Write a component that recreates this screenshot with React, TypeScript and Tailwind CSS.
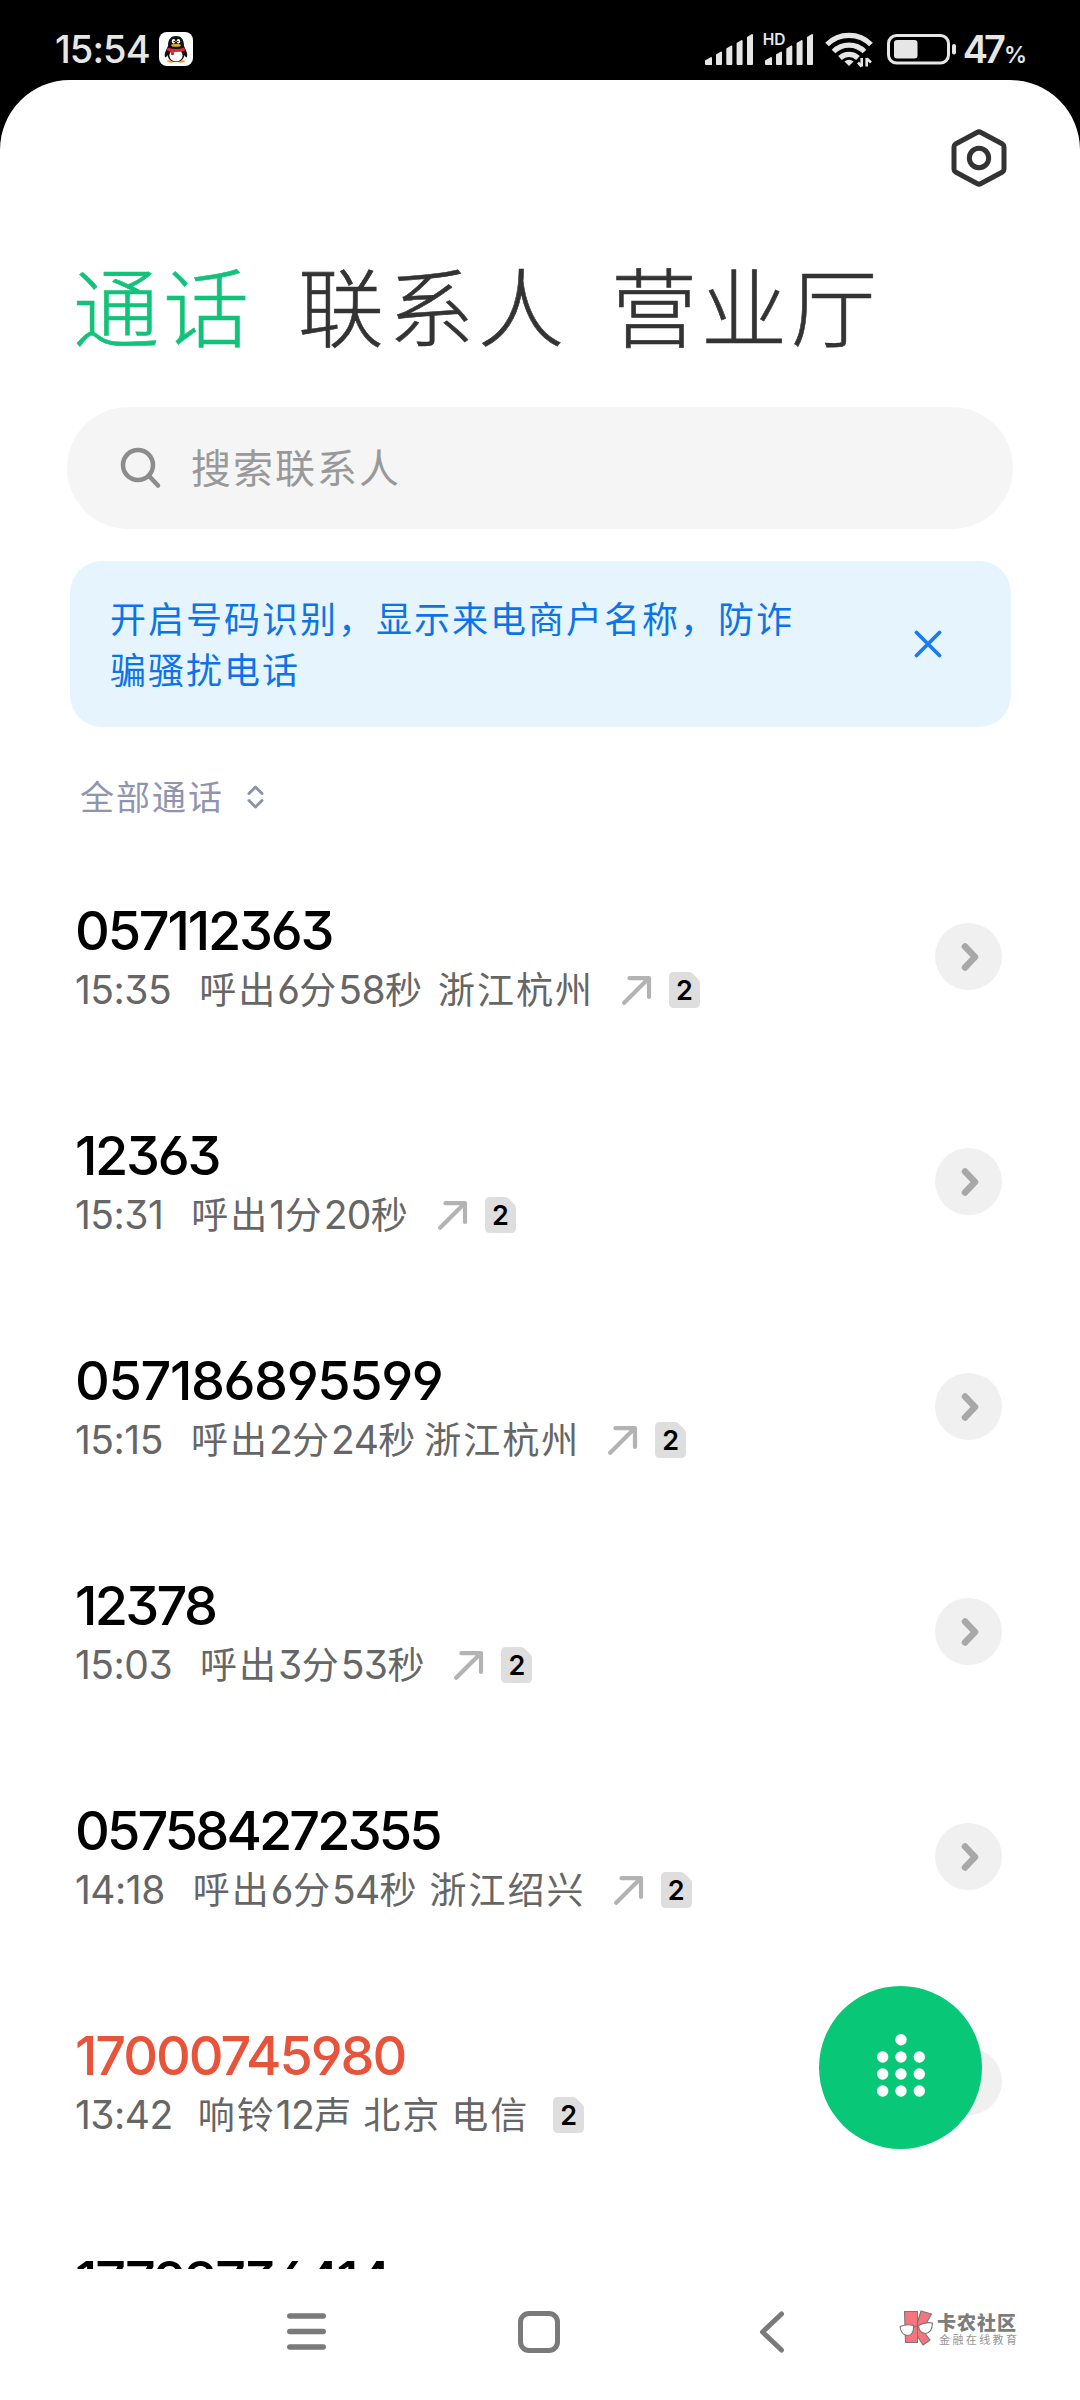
import React from 'react';

type Call = {
    number: string;
    tracking: string;
    time: string;
    detail: string;
    space?: string;
    outgoing?: boolean;
    missed?: boolean;
};

const calls: Call[] = [
    { number: '057112363', tracking: 'tracking-[-2.2px]', time: '15:35', detail: '呼出6分58秒 浙江杭州', space: 'w-[14px]', outgoing: true },
    { number: '12363', tracking: 'tracking-[-2.3px]', time: '15:31', detail: '呼出1分20秒', outgoing: true },
    { number: '057186895599', tracking: 'tracking-[-1.4px]', time: '15:15', detail: '呼出2分24秒 浙江杭州', space: 'w-[7px]', outgoing: true },
    { number: '12378', tracking: 'tracking-[-2.7px]', time: '15:03', detail: '呼出3分53秒', outgoing: true },
    { number: '057584272355', tracking: 'tracking-[-2.9px]', time: '14:18', detail: '呼出6分54秒 浙江绍兴', space: 'w-[11px]', outgoing: true },
    { number: '17000745980', tracking: 'tracking-[-2.1px]', time: '13:42', detail: '响铃12声 北京 电信', space: 'w-[10px]', missed: true },
    { number: '17798736414', tracking: 'tracking-[-2.2px]', time: '', detail: '' },
];

const digitFont = "font-['Inter',sans-serif] [font-feature-settings:'cv09','cv03','cv04']";
const hanFont = "font-['Noto_Sans_CJK_SC',sans-serif]";

/* Digits and Chinese runs use different families and sizes */
const Mixed: React.FC<{ text: string; space?: string }> = ({ text, space }) => (
    <span className="flex items-center whitespace-pre">
        {(text.match(/[0-9]+|[^0-9 ]+| /g) ?? []).map((run, i) => {
            if (run === ' ') return <span key={i} className={space}> </span>;
            return /[0-9]/.test(run) ? (
                <span key={i} className={`${digitFont} text-[39px] tracking-[-0.6px]`}>{run}</span>
            ) : (
                <span key={i} className={`${hanFont} relative -top-[2px] text-[37px] tracking-[2px]`}>{run}</span>
            );
        })}
    </span>
);

const SignalBars: React.FC = () => (
    <svg width="48" height="32" viewBox="0 0 48 32" fill="#e6e6e6">
        <path d="M0 26.5 L6 23 Q7 23 7 24 V31 H1 Q0 31 0 30Z" />
        <path d="M11 20.5 L16 17.5 Q17 17.5 17 18.5 V30 Q17 31 16 31 H12 Q11 31 11 30Z" />
        <path d="M21.3 14.5 L26.3 11.5 Q27.3 11.5 27.3 12.5 V30 Q27.3 31 26.3 31 H22.3 Q21.3 31 21.3 30Z" />
        <path d="M31.6 9 L36.6 6 Q37.6 6 37.6 7 V30 Q37.6 31 36.6 31 H32.6 Q31.6 31 31.6 30Z" />
        <path d="M42 3 L47 0 Q48 0 48 1 V30 Q48 31 47 31 H43 Q42 31 42 30Z" />
    </svg>
);

const QQIcon: React.FC = () => (
    <svg width="34" height="34" viewBox="0 0 34 34">
        <rect width="34" height="34" rx="8" fill="#fff" />
        <ellipse cx="12" cy="29.3" rx="4" ry="1.4" fill="#f0a830" />
        <ellipse cx="22" cy="29.3" rx="4" ry="1.4" fill="#f0a830" />
        <path d="M9 14 C9 7 12 4 17 4 C22 4 25 7 25 14 C27 18 29 22 28 25 C27 26 26 24 25.5 23 C25 27 22 30 17 30 C12 30 9 27 8.5 23 C8 24 7 26 6 25 C5 22 7 18 9 14Z" fill="#111" />
        <ellipse cx="17" cy="23.5" rx="6.6" ry="6" fill="#fff" />
        <ellipse cx="14.6" cy="9.3" rx="1.8" ry="2.4" fill="#fff" />
        <ellipse cx="19.4" cy="9.3" rx="1.8" ry="2.4" fill="#fff" />
        <circle cx="15.2" cy="9.6" r=".8" fill="#111" />
        <circle cx="18.9" cy="9.6" r=".8" fill="#111" />
        <ellipse cx="17" cy="13.3" rx="4.8" ry="1.5" fill="#e0b020" />
        <path d="M8.6 15.5 Q17 18.5 25.4 15.5 L26 18.5 Q21 20.5 15 20 V23 H12 V19.3 Q10 19 8 18.5Z" fill="#e02b35" />
    </svg>
);

const StatusBar: React.FC = () => (
    <header className="flex h-[80px] items-start justify-between bg-black pl-[55px] pr-[54px] pt-[32px] text-[#e6e6e6]">
        <div className="flex items-center gap-[9px]">
            <span className="font-['Inter',sans-serif] text-[38px] font-medium leading-[34px] tracking-[-0.9px]">15:54</span>
            <QQIcon />
        </div>
        <div className="flex h-[34px] items-start">
            <div className="mt-[2px]"><SignalBars /></div>
            <div className="relative ml-[12px] mt-[2px]">
                <SignalBars />
                <span className="absolute -left-[4px] -top-[2px] bg-black pl-[2px] pr-[1px] font-['Inter',sans-serif] text-[15.5px] font-semibold leading-[16px]">HD</span>
            </div>
            <svg className="ml-[12px]" width="48" height="36" viewBox="0 0 48 36" fill="none" stroke="#e6e6e6">
                <path d="M2 12.5 A31 31 0 0 1 46 12.5" strokeWidth="5.2" />
                <path d="M8.5 19.5 A22 22 0 0 1 39.5 19.5" strokeWidth="5.2" />
                <path d="M15 26 A13 13 0 0 1 33 26" strokeWidth="5.2" />
                <path d="M24 34 L19.5 29.5 A6.5 6.5 0 0 1 28.5 29.5Z" fill="#e6e6e6" stroke="none" />
                <path d="M36.7 26 V34.5 M41.7 26 V34.5" strokeWidth="2.6" />
                <path d="M33 30.5 L36.7 34.5 M41.7 26.5 L46 30.5" strokeWidth="2.6" />
            </svg>
            <svg className="ml-[14px] mt-[2px]" width="70" height="31" viewBox="0 0 70 31" fill="none">
                <rect x="1.5" y="1.5" width="60" height="27.5" rx="8" stroke="#e6e6e6" strokeWidth="3" />
                <rect x="7" y="6" width="23.5" height="18.5" rx="3" fill="#e6e6e6" />
                <rect x="65" y="10" width="4" height="10.5" rx="2" fill="#e6e6e6" />
            </svg>
            <span className="ml-[6px] font-['Inter',sans-serif] text-[38px] font-semibold leading-[34px] tracking-[-4px]">47</span>
            <span className="-mr-[1px] ml-[2px] mt-[12px] font-['Inter',sans-serif] text-[23px] font-semibold leading-[22px]">%</span>
        </div>
    </header>
);

const SimBadge: React.FC = () => (
    <span className={`relative flex h-[36px] w-[31px] items-center justify-center ${digitFont} text-[27px] font-semibold leading-none text-black`}>
        <svg className="absolute inset-0" width="31" height="36" viewBox="0 0 31 36">
            <path d="M5 0 H20 Q22 0 23.5 1.5 L29 7 Q31 9 31 11 V31 Q31 36 26 36 H5 Q0 36 0 31 V5 Q0 0 5 0Z" fill="#dedede" />
        </svg>
        <span className="relative">2</span>
    </span>
);

const CallRow: React.FC<{ call: Call }> = ({ call }) => (
    <li className="flex h-[225px] shrink-0 items-start justify-between pl-[75px] pr-[78px]">
        <div className="pt-[56px]">
            <div className={`${digitFont} h-[62px] text-[54px] font-medium leading-[62px] ${call.tracking} ${call.missed ? 'text-[#e8533b]' : 'text-black'}`}>
                {call.number}
            </div>
            {call.time && (
                <div className="flex h-[56px] items-center leading-[56px] text-[#666666]">
                    <span className={`${digitFont} text-[39px] tracking-[-0.5px]`}>{call.time}</span>
                    <span className={call.missed ? 'ml-[25px]' : 'ml-[28px]'}>
                        <Mixed text={call.detail} space={call.space} />
                    </span>
                    {call.outgoing && (
                        <svg className="ml-[28px] mr-[-7px]" width="30" height="29" viewBox="0 0 30 29" fill="none" stroke="#b3b3b3" strokeWidth="4.2" strokeLinecap="round" strokeLinejoin="round">
                            <path d="M2.2 26.8 L26 3 M7.500 2.200 H27 V21" />
                        </svg>
                    )}
                    <span className="ml-[24px]"><SimBadge /></span>
                </div>
            )}
        </div>
        <button className="mt-[79px] flex size-[67px] items-center justify-center rounded-full bg-[#f0f0f0]">
            <svg width="20" height="30" viewBox="0 0 20 30" fill="none" stroke="#a8a8a8" strokeWidth="6.5" strokeLinecap="round" strokeLinejoin="round">
                <path d="M6 4.5 L16 15 L6 25.5" />
            </svg>
        </button>
    </li>
);

const NavBar: React.FC = () => (
    <nav className="relative flex h-[131px] items-start bg-white">
        <svg className="ml-[287px] mt-[43px]" width="39" height="40" viewBox="0 0 39 40" stroke="#7a7a7a" strokeWidth="5.5" strokeLinecap="round">
            <path d="M2.8 4 H36.2 M2.8 19.5 H36.2 M2.8 35 H36.2" />
        </svg>
        <div className="ml-[192px] mt-[42px] size-[42px] rounded-[11px] border-[5px] border-[#7a7a7a]" />
        <svg className="ml-[199px] mt-[42px]" width="26" height="42" viewBox="0 0 26 42" fill="none" stroke="#7a7a7a" strokeWidth="5" strokeLinecap="round" strokeLinejoin="round">
            <path d="M22.5 3 L3.5 21 L22.5 39" />
        </svg>
        <div className="ml-[114px] mt-[41px] flex items-start gap-[3px]">
            <svg width="35" height="37" viewBox="0 0 35 37" stroke="#777" strokeWidth="1.100" strokeLinejoin="round">
                <g fill="#f5757f">
                    <path d="M22 1 L32.500 4 L23.500 20 L31 30 L24 35 L17 24 V17Z" />
                    <path d="M5.500 1.500 H18.500 V32.500 H6.500Z" />
                </g>
                <path d="M14 18 Q17 15 20 17" fill="none" />
                <path d="M1 16.500 Q8 13.500 14.500 15.500 Q15 25.500 8.500 25.500 Q2 25 1 16.500Z" fill="#fff" />
                <path d="M19.500 15.500 Q26 11.500 33.500 13 Q33 23 26.500 23.500 Q20 23 19.500 15.500Z" fill="#fff" />
            </svg>
            <div className={`${hanFont} flex flex-col pt-[1px]`}>
                <span className="h-[22px] text-[19px] font-black leading-[22px] tracking-[1px] text-[#7d7d7d]">卡农社区</span>
                <span className="h-[12px] pl-[2px] text-[11px] leading-[12px] tracking-[2.400px] text-[#959595]">金融在线教育</span>
            </div>
        </div>
    </nav>
);

const App: React.FC = () => (
    <div className="relative h-[2400px] w-[1080px] overflow-hidden bg-black">
        <StatusBar />
        <main className="flex h-[2320px] flex-col rounded-t-[70px] bg-white">
            <div className="flex h-[156px] justify-end pr-[73px] pt-[48px]">
                <svg width="56" height="60" viewBox="0 0 56 60" fill="none" stroke="#333" strokeWidth="5" strokeLinejoin="round">
                    <path d="M26 4.500 Q28 3.300 30 4.500 L51.500 16 Q53 17 53 19 V41 Q53 43 51.500 44 L30 55.500 Q28 56.700 26 55.500 L4.500 44 Q3 43 3 41 V19 Q3 17 4.500 16Z" />
                    <circle cx="28" cy="30" r="9.700" />
                </svg>
            </div>

            <div className={`${hanFont} flex h-[144px] items-center pb-[8px] pl-[73px] text-[86px] font-light leading-[136px] tracking-[4px] text-[#333] [-webkit-text-stroke:0.6px]`}>
                <span className="text-[#12c27a]">通话</span>
                <span className="ml-[45px]">联系人</span>
                <span className="ml-[43px]">营业厅</span>
            </div>

            <div className={`${hanFont} ml-[67px] mt-[27px] flex h-[122px] w-[946px] items-center rounded-full bg-[#f5f5f5] pl-[53px]`}>
                <svg width="42" height="42" viewBox="0 0 42 42" fill="none" stroke="#8c8c8c" strokeWidth="4.500" strokeLinecap="round">
                    <circle cx="18" cy="18" r="15" />
                    <path d="M29 29 L38 38.500" />
                </svg>
                <span className="ml-[29px] pb-[4px] text-[40px] tracking-[2px] text-[#999]">搜索联系人</span>
            </div>

            <div className={`${hanFont} ml-[70px] mt-[32px] flex h-[166px] w-[941px] items-center justify-between rounded-[32px] bg-[#e6f4fe] pl-[40px] pr-[69px]`}>
                <p className="pb-[2px] text-[36px] leading-[51px] tracking-[2px] text-[#0d74e6]">
                    开启号码识别，显示来电商户名称，防诈
                    <br />
                    骗骚扰电话
                </p>
                <svg width="28" height="28" viewBox="0 0 28 28" stroke="#1a7cf0" strokeWidth="3.800" strokeLinecap="round">
                    <path d="M2.500 2.500 L25.500 25.500 M25.500 2.500 L2.500 25.500" />
                </svg>
            </div>

            <div className={`${hanFont} flex h-[117px] items-center pl-[80px] pt-[22px] text-[34px] tracking-[2px] text-[#9094b0]`}>
                <span className="pb-[2px]">全部通话</span>
                <svg className="ml-[23px]" width="17" height="24" viewBox="0 0 17 24" fill="none" stroke="#8f93a8" strokeWidth="3" strokeLinecap="round" strokeLinejoin="round">
                    <path d="M2 8.500 L8.500 2 L15 8.500 M2 15.500 L8.500 22 L15 15.500" />
                </svg>
            </div>

            <ul className="flex h-[1425px] flex-col overflow-hidden">
                {calls.map((call) => (
                    <CallRow key={call.number} call={call} />
                ))}
            </ul>

            <NavBar />
        </main>

        {/* Floating dial pad button */}
        <button className="absolute left-[819px] top-[1986px] flex size-[163px] items-center justify-center rounded-full bg-[#08c777]">
            <svg className="overflow-visible" width="50" height="64" viewBox="0 0 50 64" fill="#fff">
                <circle cx="25" cy="3.800" r="5.700" />
                {[21, 38, 55].map((y) => (
                    <g key={y}>
                        <circle cx="6.700" cy={y} r="5.700" />
                        <circle cx="25" cy={y} r="5.700" />
                        <circle cx="43.300" cy={y} r="5.700" />
                    </g>
                ))}
            </svg>
        </button>
    </div>
);

export default App;
